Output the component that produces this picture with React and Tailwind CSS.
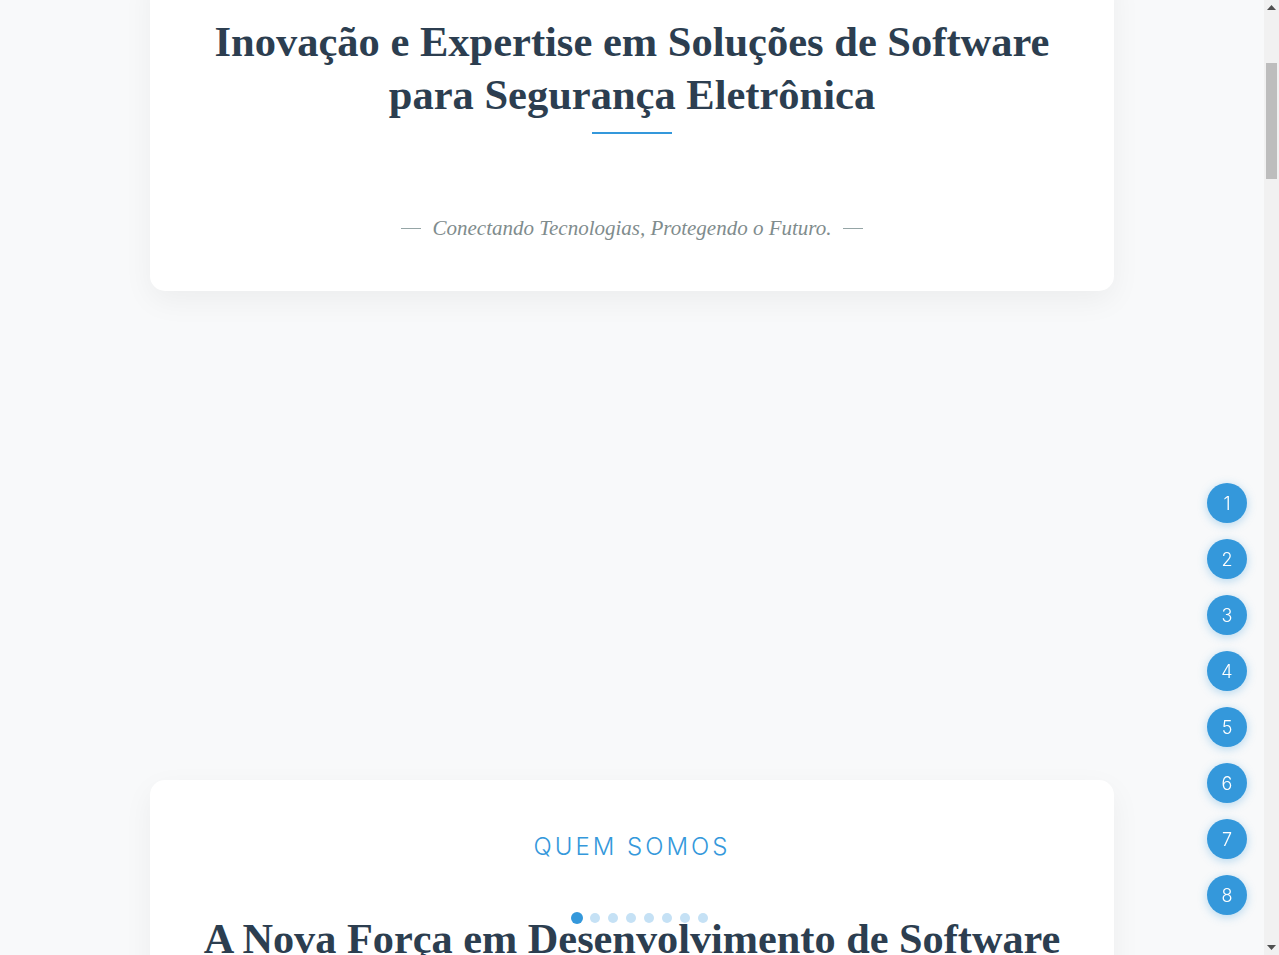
import React, { useLayoutEffect, useEffect } from "react";

const serif = { fontFamily: '"Liberation Serif", "DejaVu Serif", serif' };
const sans = { fontFamily: 'Inter, "Noto Sans", sans-serif' };

function ScrollBar() {
  return (
    <div className="fixed top-0 right-0 w-[15px] h-screen bg-[#f1f1f1] flex flex-col items-center">
      <div className="h-[15px] flex items-center justify-center">
        <svg width="9" height="5" viewBox="0 0 9 5">
          <path d="M0 5 L4.5 0 L9 5 Z" fill="#505050" />
        </svg>
      </div>
      <div className="mt-[48px] w-[11px] h-[116px] bg-[#bdbdbd]" />
      <div className="flex-1" />
      <div className="h-[15px] flex items-center justify-center">
        <svg width="9" height="5" viewBox="0 0 9 5">
          <path d="M0 0 L9 0 L4.5 5 Z" fill="#505050" />
        </svg>
      </div>
    </div>
  );
}

export default function App() {
  useLayoutEffect(() => {
    window.scrollTo(0, 393);
  }, []);
  useEffect(() => {
    window.scrollTo(0, 393);
  }, []);

  const nums = [1, 2, 3, 4, 5, 6, 7, 8];

  return (
    <div className="min-h-[7615px] bg-[#f8f9fa] text-[#2c3e50]">
      <div className="w-[1264px]">
        <div className="w-[964px] mx-auto pt-[360px]">
          <section className="bg-white rounded-[15px] shadow-[0_10px_30px_rgba(0,0,0,0.05)] px-12 pt-12 pb-12 text-center">
            <h1 style={serif} className="text-[42.5px] leading-[53px] font-bold text-[#2c3e50]">
              Inovação e Expertise em Soluções de Software
              <br />
              para Segurança Eletrônica
            </h1>
            <div className="mx-auto mt-[11px] w-20 h-0.5 bg-[#3498db]" />
            <p style={serif} className="mt-[79px] flex items-center justify-center gap-3 text-[21px] leading-[30px] italic text-[#7f8c8d]">
              <span className="inline-block w-5 h-px bg-[#95a5a6]" />
              <span>Conectando Tecnologias, Protegendo o Futuro.</span>
              <span className="inline-block w-5 h-px bg-[#95a5a6]" />
            </p>
          </section>

          <section className="mt-[489px] bg-white rounded-[15px] shadow-[0_10px_30px_rgba(0,0,0,0.05)] px-12 pt-[49px] pb-16 text-center">
            <h3 style={sans} className="text-[24px] leading-9 font-light tracking-[3px] text-[#3498db]">
              QUEM SOMOS
            </h3>
            <h2 style={serif} className="mt-[47px] text-[42.3px] leading-[53px] font-bold text-[#2c3e50]">
              A Nova Força em Desenvolvimento de Software
            </h2>
            <div className="mx-auto mt-[11px] w-20 h-0.5 bg-[#3498db]" />
            <p style={sans} className="mt-10 text-lg leading-8 text-[#555] max-w-[760px] mx-auto">
              Somos uma empresa especializada no desenvolvimento de soluções de software
              para o mercado de segurança eletrônica, unindo tecnologia, integração e
              experiência para proteger o que importa.
            </p>
          </section>
        </div>
      </div>

      <nav className="fixed bottom-[32px] left-1/2 -translate-x-1/2 flex items-center gap-2">
        {nums.map((n) => (
          <span
            key={n}
            className={
              n === 1
                ? "block w-2.5 h-2.5 rounded-full bg-[#3498db] scale-[1.2]"
                : "block w-2.5 h-2.5 rounded-full bg-[#c5e1f5]"
            }
          />
        ))}
      </nav>

      <nav className="fixed right-[32px] bottom-10 flex flex-col gap-4">
        {nums.map((n) => (
          <span
            key={n}
            style={sans}
            className="flex items-center justify-center w-10 h-10 rounded-full bg-[#3498db] text-white text-lg font-light pt-px shadow-[0_2px_10px_rgba(52,152,219,0.35)]"
          >
            {n}
          </span>
        ))}
      </nav>

      <ScrollBar />
    </div>
  );
}
